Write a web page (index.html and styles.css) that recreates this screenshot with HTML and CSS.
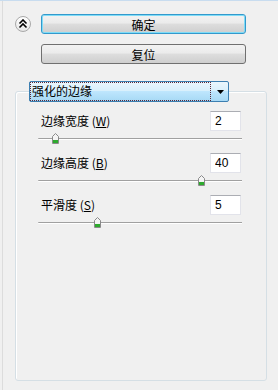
FILE: index.html
```html
<!DOCTYPE html>
<html lang="zh-CN">

<head>
    <meta charset="UTF-8">
    <title>强化的边缘</title>
    <link rel="stylesheet" href="styles.css">
</head>

<body>
    <div class="panel">
        <div class="top-row">
            <span class="collapse">
                <svg width="10" height="10" viewBox="0 0 10 10">
                    <polyline points="1.5,4.5 5,1 8.5,4.5" fill="none" stroke="#000" stroke-width="1.6"/>
                    <polyline points="1.5,8.5 5,5 8.5,8.5" fill="none" stroke="#000" stroke-width="1.6"/>
                </svg>
            </span>
            <button class="btn btn-default">确定</button>
        </div>
        <button class="btn btn-reset">复位</button>

        <div class="select">
            <span class="select-text">强化的边缘</span>
            <svg class="arrow" width="7" height="4" viewBox="0 0 7 4">
                <polygon points="0,0 7,0 3.5,4" fill="#000"/>
            </svg>
        </div>

        <div class="group">
            <div class="field">
                <div class="field-row">
                    <label>边缘宽度 (<u>W</u>)</label>
                    <input class="num" type="text" value="2">
                </div>
                <div class="slider">
                    <svg class="thumb" style="left: 14px" width="7" height="11" viewBox="0 0 7 11">
                        <polygon points="3.5,0.5 6.5,3.5 6.5,10.5 0.5,10.5 0.5,3.5" fill="#f4f4f4" stroke="#8a8a8a"/>
                        <rect x="1" y="7" width="5" height="3" fill="#2eaa2e"/>
                    </svg>
                </div>
            </div>
            <div class="field">
                <div class="field-row">
                    <label>边缘高度 (<u>B</u>)</label>
                    <input class="num" type="text" value="40">
                </div>
                <div class="slider">
                    <svg class="thumb" style="left: 160px" width="7" height="11" viewBox="0 0 7 11">
                        <polygon points="3.5,0.5 6.5,3.5 6.5,10.5 0.5,10.5 0.5,3.5" fill="#f4f4f4" stroke="#8a8a8a"/>
                        <rect x="1" y="7" width="5" height="3" fill="#2eaa2e"/>
                    </svg>
                </div>
            </div>
            <div class="field">
                <div class="field-row">
                    <label>平滑度 (<u>S</u>)</label>
                    <input class="num" type="text" value="5">
                </div>
                <div class="slider">
                    <svg class="thumb" style="left: 56px" width="7" height="11" viewBox="0 0 7 11">
                        <polygon points="3.5,0.5 6.5,3.5 6.5,10.5 0.5,10.5 0.5,3.5" fill="#f4f4f4" stroke="#8a8a8a"/>
                        <rect x="1" y="7" width="5" height="3" fill="#2eaa2e"/>
                    </svg>
                </div>
            </div>
        </div>
    </div>
</body>

</html>
```

FILE: styles.css
```css
html,
body {
    background-color: #f0f0f0;
}

body {
    margin: 0;
    border-top: 1px solid #c8dcef;
    font-family: "Noto Sans CJK SC", "DejaVu Sans", sans-serif;
    font-size: 12px;
    color: #000;
}

.panel {
    margin-left: 2px;
    height: 389px;
    padding-top: 13px;
    box-sizing: border-box;
    border-left: 1px solid #dcdcdc;
}

.top-row {
    display: flex;
    align-items: center;
    height: 20px;
}

.collapse {
    display: flex;
    align-items: center;
    justify-content: center;
    width: 16px;
    height: 16px;
    margin-left: 12px;
    box-sizing: border-box;
    border: 1px solid #a9a9a9;
    border-radius: 50%;
    background: linear-gradient(#ffffff, #e6e6e6);
}

.btn {
    display: block;
    width: 205px;
    height: 20px;
    padding: 0;
    box-sizing: border-box;
    border: 1px solid #707070;
    border-radius: 3px;
    background: linear-gradient(#f2f2f2 0%, #ebebeb 45%, #dddddd 50%, #cfcfcf 100%);
    font-family: inherit;
    font-size: 12px;
    line-height: 17px;
    color: #000;
}

.btn-default {
    margin-left: 10px;
    border-color: #3399cc;
    box-shadow: inset 0 0 0 1px #7fdcf7;
}

.btn-reset {
    margin: 10px 0 0 38px;
}

.select {
    position: relative;
    z-index: 1;
    display: flex;
    align-items: center;
    width: 200px;
    height: 21px;
    margin: 17px 0 0 26px;
    box-sizing: border-box;
    border: 1px solid #3c7fb1;
    border-radius: 2px;
    background: linear-gradient(#eaf6fd 0%, #d9f0fc 45%, #bee6fd 50%, #a7d9f5 100%);
}

.select-text {
    width: 181px;
    height: 19px;
    box-sizing: border-box;
    padding-left: 1px;
    border: 1px dotted #5a2a3a;
    line-height: 16px;
}

.arrow {
    margin-left: 6px;
}

.group {
    width: 252px;
    height: 290px;
    margin: -11px 0 0 12px;
    box-sizing: border-box;
    border: 1px solid #d5dfe5;
    border-radius: 3px;
    box-shadow: inset 1px 1px 0 #fff;
    padding-top: 19px;
}

.field + .field {
    margin-top: 8px;
}

.field-row {
    display: flex;
    align-items: center;
    justify-content: space-between;
    height: 20px;
    padding: 0 25px;
}

.field-row label {
    line-height: 16px;
}

.num {
    width: 31px;
    height: 20px;
    box-sizing: border-box;
    padding: 0 0 0 4px;
    border: 1px solid #e2e3ea;
    border-top-color: #abadb3;
    background-color: #fff;
    font-family: "Liberation Sans", sans-serif;
    font-size: 12px;
    color: #000;
}

.slider {
    position: relative;
    width: 204px;
    height: 12px;
    margin: 2px 0 0 22px;
}

.slider::before {
    content: "";
    position: absolute;
    left: 0;
    right: 0;
    top: 5px;
    border-top: 1px solid #a0a0a0;
    border-bottom: 1px solid #fff;
    border-radius: 1px 0 0 1px;
}

.thumb {
    position: absolute;
    top: 0;
    display: block;
}
```
